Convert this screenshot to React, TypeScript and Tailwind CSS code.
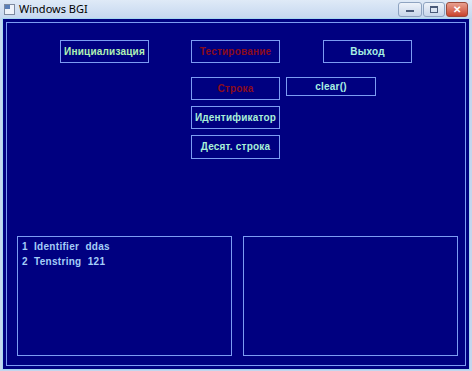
import React from 'react';

const btn =
  'flex items-center justify-center border border-[#7c9cf2] text-[10px] font-bold leading-none tracking-[0.2px]';

function TitleBar() {
  return (
    <div className="flex h-[18px] items-center bg-gradient-to-b from-[#dfeaf7] to-[#c6d8ef] pl-[4px] pr-[4px]">
      <div className="mr-[4px] h-[11px] w-[11px] border border-[#7d8aa0] bg-[#eef3fa]">
        <div className="h-[4px] w-[5px] bg-[#5a7fb8]" />
      </div>
      <span className="text-[11px] text-black" style={{ fontFamily: '"Noto Sans", "Liberation Sans", sans-serif' }}>
        Windows BGI
      </span>
      <div className="ml-auto flex items-start gap-[1px] self-start pt-[2px]">
        <div className="flex h-[15px] w-[24px] items-end justify-center rounded-[3px] border border-[#8ea3c0] bg-gradient-to-b from-[#eef3fa] to-[#c8d6ea] pb-[4px]">
          <div className="h-[2px] w-[8px] bg-[#4a5a78]" />
        </div>
        <div className="flex h-[15px] w-[22px] items-center justify-center rounded-[3px] border border-[#8ea3c0] bg-gradient-to-b from-[#eef3fa] to-[#c8d6ea]">
          <div className="h-[7px] w-[8px] border border-[#4a5a78] border-t-2" />
        </div>
        <div className="flex h-[15px] w-[22px] items-center justify-center rounded-[3px] border border-[#9a4a3a] bg-gradient-to-b from-[#e8a090] to-[#c8422c] text-[10px] font-bold leading-none text-white">
          ✕
        </div>
      </div>
    </div>
  );
}

export default function App() {
  const font = { fontFamily: '"Liberation Sans", Arial, sans-serif' };
  return (
    <div className="h-[371px] w-[472px] overflow-hidden bg-[#c4d6ee]" style={font}>
      <TitleBar />
      <div className="mx-[2px] h-[352px] border border-[#a6d8f0] bg-[#000080] px-[3px] pt-[3px]">
        <div className="flex h-[344px] flex-col border border-[#7c9cf2]">
          <div className="flex pt-[17px]">
            <div className={`${btn} ml-[53px] h-[23px] w-[89px] text-[#b0f2b4]`}>Инициализация</div>
            <div className="ml-[42px] flex w-[89px] flex-col">
              <div className={`${btn} h-[23px] text-[#8a0c1c]`}>Тестирование</div>
              <div className={`${btn} mt-[14px] h-[23px] text-[#8a0c1c]`}>Строка</div>
              <div className={`${btn} mt-[6px] h-[23px] text-[#a8f0d8]`}>Идентификатор</div>
              <div className={`${btn} mt-[6px] h-[24px] text-[#a8f0d8]`}>Десят. строка</div>
            </div>
            <div className="ml-[6px] flex flex-col">
              <div className={`${btn} ml-[37px] h-[23px] w-[89px] text-[#a8f0e4]`}>Выход</div>
              <div className={`${btn} mt-[14px] h-[19px] w-[90px] text-[#a8f0e4]`}>clear()</div>
            </div>
          </div>
          <div className="mt-auto flex gap-[11px] pb-[9px] pl-[10px] pr-[7px]">
            <div className="h-[120px] w-[215px] border border-[#7c9cf2] pl-[4px] pt-[2px] text-[10px] font-bold leading-[15px] tracking-[0.3px] text-[#a4cdf8]">
              <div className="whitespace-pre">1  Identifier  ddas</div>
              <div className="whitespace-pre">2  Tenstring  121</div>
            </div>
            <div className="h-[120px] w-[216px] border border-[#7c9cf2]" />
          </div>
        </div>
      </div>
    </div>
  );
}
